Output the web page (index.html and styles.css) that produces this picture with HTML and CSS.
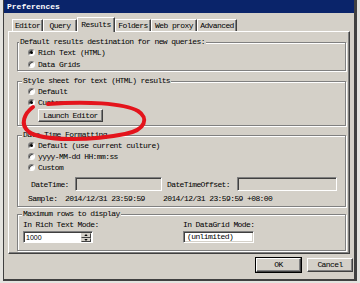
FILE: index.html
```html
<!DOCTYPE html>
<html>
<head>
  <title>Preferences</title>
  <link rel="stylesheet" href="styles.css">
</head>
<body>
  <div class="window">
    <div class="titlebar">Preferences</div>

    <div class="client">
      <div class="tabs">
        <div class="tab tab-editor">Editor</div>
        <div class="tab tab-query">Query</div>
        <div class="tab tab-results active">Results</div>
        <div class="tab tab-folders">Folders</div>
        <div class="tab tab-proxy">Web proxy</div>
        <div class="tab tab-advanced">Advanced</div>
      </div>

      <div class="panel">
        <div class="group group-dest">
          <div class="group-title">Default results destination for new queries:</div>
          <div class="radio checked"><span class="dot"></span>Rich Text (HTML)</div>
          <div class="radio"><span class="dot"></span>Data Grids</div>
        </div>

        <div class="group group-style">
          <div class="group-title">Style sheet for text (HTML) results</div>
          <div class="radio"><span class="dot"></span>Default</div>
          <div class="radio checked"><span class="dot"></span>Custom</div>
          <div class="btn btn-launch">Launch Editor</div>
        </div>

        <div class="group group-date">
          <div class="group-title">Date Time Formatting</div>
          <div class="radio checked"><span class="dot"></span>Default (use current culture)</div>
          <div class="radio"><span class="dot"></span>yyyy-MM-dd HH:mm:ss</div>
          <div class="radio"><span class="dot"></span>Custom</div>
          <div class="format-row">
            <span class="label label-dt">DateTime:</span>
            <span class="field disabled field-dt"></span>
            <span class="label label-dto">DateTimeOffset:</span>
            <span class="field disabled field-dto"></span>
          </div>
          <div class="sample-row">
            <span class="sample-label">Sample:</span>
            <span class="sample-dt">2014/12/31 23:59:59</span>
            <span>2014/12/31 23:59:59 +08:00</span>
          </div>
        </div>

        <div class="group group-rows">
          <div class="group-title">Maximum rows to display</div>
          <div class="rows-grid">
            <div class="rows-label">In Rich Text Mode:</div>
            <div class="rows-label">In DataGrid Mode:</div>
            <div class="spin">
              <span class="field spin-value">1000</span>
              <span class="spin-buttons">
                <span class="spin-btn"><svg width="5" height="3" viewBox="0 0 5 3"><path d="M0 3h5L2.5 0z" fill="#000"/></svg></span>
                <span class="spin-btn"><svg width="5" height="3" viewBox="0 0 5 3"><path d="M0 0h5L2.5 3z" fill="#000"/></svg></span>
              </span>
            </div>
            <span class="field field-grid">(unlimited)</span>
          </div>
        </div>
      </div>

      <div class="buttons">
        <div class="btn btn-ok">OK</div>
        <div class="btn btn-cancel">Cancel</div>
      </div>
    </div>

    <!-- red marker loop drawn over the dialog -->
    <svg class="scribble" width="350" height="281" viewBox="0 0 350 281">
      <path d="M33 107 C 25 113, 19 124, 29 132 C 42 141, 90 141, 125 134 C 146 130, 149 118, 138 111 C 124 103, 85 101, 48 104" transform="translate(-4 0)" fill="none" stroke="#e4141c" stroke-width="4" stroke-linecap="round"/>
    </svg>
  </div>
</body>
</html>
```

FILE: styles.css
```css
:root {
  --face: #d4d0c8;
  --shadow: #808080;
  --dark: #404040;
  --light: #ffffff;
  --title: #0a246a;
}

body {
  margin: 0;
  background-color: #e4e3df;
}

.window {
  position: relative;
  margin-left: 3px;
  width: 354px;
  height: 281px;
  box-sizing: border-box;
  background-color: var(--face);
  border-left: 1px solid var(--dark);
  border-right: 3px solid var(--dark);
  border-bottom: 2px solid var(--dark);
  font-family: "Liberation Mono", monospace;
  font-size: 8px;
  letter-spacing: -0.6px;
  color: #000;
}

.titlebar {
  height: 13px;
  line-height: 13px;
  padding-left: 3px;
  background-color: var(--title);
  color: var(--light);
  font-weight: bold;
  letter-spacing: 0;
}

.client {
  padding: 4px 0 0 4px;
}

/* tabs */

.tabs {
  display: flex;
  align-items: flex-end;
  height: 14px;
  padding-left: 4px;
}

.tab {
  height: 12px;
  box-sizing: border-box;
  border-top: 1px solid var(--light);
  border-left: 1px solid var(--light);
  border-right: 1px solid var(--dark);
  box-shadow: inset -1px 0 0 var(--shadow);
  text-align: center;
  line-height: 11px;
}

.tab.active {
  position: relative;
  z-index: 1;
  height: 15px;
  margin-bottom: -1px;
  line-height: 13px;
  background-color: var(--face);
}

.tab-editor { width: 31px; }
.tab-query { width: 34px; }
.tab-results { width: 38px; }
.tab-folders { width: 36px; }
.tab-proxy { width: 46px; }
.tab-advanced { width: 40px; }

.panel {
  width: 342px;
  box-sizing: border-box;
  border-top: 1px solid var(--light);
  border-left: 1px solid var(--light);
  border-right: 1px solid var(--dark);
  border-bottom: 1px solid var(--dark);
  box-shadow: inset -1px -1px 0 var(--shadow);
  padding: 10px 3px 2px 8px;
}

/* group boxes */

.group {
  border: 1px solid var(--shadow);
  box-shadow: inset 1px 1px 0 var(--light), 1px 1px 0 var(--light);
  padding-left: 10px;
}

.group-title {
  display: table;
  margin: -5px 0 0 -6px;
  padding: 0 1px;
  line-height: 8px;
  background-color: var(--face);
}

.group-dest .group-title {
  margin-left: -9px;
}

.group-style {
  margin-top: 10px;
  padding-bottom: 3px;
}

.group-date {
  margin-top: 9px;
  padding-bottom: 2px;
}

.group-rows {
  margin-top: 7px;
  padding-bottom: 7px;
}

.radio {
  display: flex;
  align-items: center;
  gap: 3px;
  height: 12px;
}

.group-style .radio,
.group-date .radio {
  height: 11px;
}

.group-style .group-title + .radio,
.group-date .group-title + .radio {
  margin-top: 1px;
}

.dot {
  position: relative;
  width: 7px;
  height: 7px;
  box-sizing: border-box;
  border-radius: 50%;
  border: 1px solid;
  border-color: var(--shadow) var(--light) var(--light) var(--shadow);
  box-shadow: inset 1px 1px 0 var(--dark);
  background-color: var(--light);
}

.radio.checked .dot::after {
  content: "";
  position: absolute;
  left: 1px;
  top: 1px;
  width: 3px;
  height: 3px;
  border-radius: 50%;
  background-color: #000;
}

/* buttons */

.btn {
  box-sizing: border-box;
  border: 1px solid;
  border-color: var(--light) var(--dark) var(--dark) var(--light);
  box-shadow: inset -1px -1px 0 var(--shadow);
  text-align: center;
}

.btn-launch {
  width: 65px;
  height: 13px;
  line-height: 11px;
  margin: 1px 0 0 10px;
}

.buttons {
  display: flex;
  justify-content: flex-end;
  gap: 5px;
  margin-top: 4px;
  padding-right: 1px;
}

.btn-ok,
.btn-cancel {
  height: 14px;
  line-height: 12px;
}

.btn-ok {
  width: 45px;
  margin-right: 1px;
  box-shadow: 0 0 0 1px #000, inset -1px -1px 0 var(--shadow);
}

.btn-cancel {
  width: 46px;
}

/* fields */

.field {
  display: block;
  box-sizing: border-box;
  border: 1px solid;
  border-color: var(--shadow) var(--light) var(--light) var(--shadow);
  box-shadow: inset 1px 1px 0 var(--dark), inset -1px -1px 0 var(--face);
  background-color: var(--light);
}

.field.disabled {
  background-color: var(--face);
}

.format-row {
  display: flex;
  align-items: center;
  height: 14px;
  margin-top: 4px;
}

.label-dt {
  width: 44px;
  margin-left: 3px;
}

.field-dt {
  width: 87px;
  height: 14px;
}

.label-dto {
  width: 70px;
  margin-left: 5px;
}

.field-dto {
  width: 100px;
  height: 14px;
}

.sample-row {
  display: flex;
  align-items: center;
  height: 12px;
  margin-top: 1px;
}

.sample-label {
  width: 37px;
}

.sample-dt {
  width: 98px;
}

.rows-grid {
  display: grid;
  grid-template-columns: 160px auto;
  margin: 2px 0 0 -5px;
}

.rows-label {
  line-height: 10px;
  height: 11px;
}

.spin {
  display: flex;
  width: 70px;
  height: 12px;
  box-sizing: border-box;
  border: 1px solid;
  border-color: var(--shadow) var(--light) var(--light) var(--shadow);
  box-shadow: inset 1px 1px 0 var(--dark);
  background-color: var(--light);
}

.spin-value {
  flex: 1;
  border: none;
  box-shadow: none;
  padding: 1px 0 0 2px;
  font-family: "Liberation Sans", Arial, sans-serif;
  font-size: 7px;
  letter-spacing: 0;
  line-height: 9px;
  background: transparent;
}

.spin-buttons {
  display: flex;
  flex-direction: column;
  width: 10px;
  padding: 1px 1px 0 0;
}

.spin-btn {
  flex: 1;
  display: flex;
  align-items: center;
  justify-content: center;
  box-sizing: border-box;
  border: 1px solid;
  border-color: var(--face) var(--dark) var(--dark) var(--face);
  background-color: var(--face);
}

.spin-btn svg {
  width: 4px;
  height: 2px;
}

.field-grid {
  width: 71px;
  height: 12px;
  padding-left: 3px;
  line-height: 10px;
}

.scribble {
  position: absolute;
  left: 0;
  top: 0;
  pointer-events: none;
}
```
